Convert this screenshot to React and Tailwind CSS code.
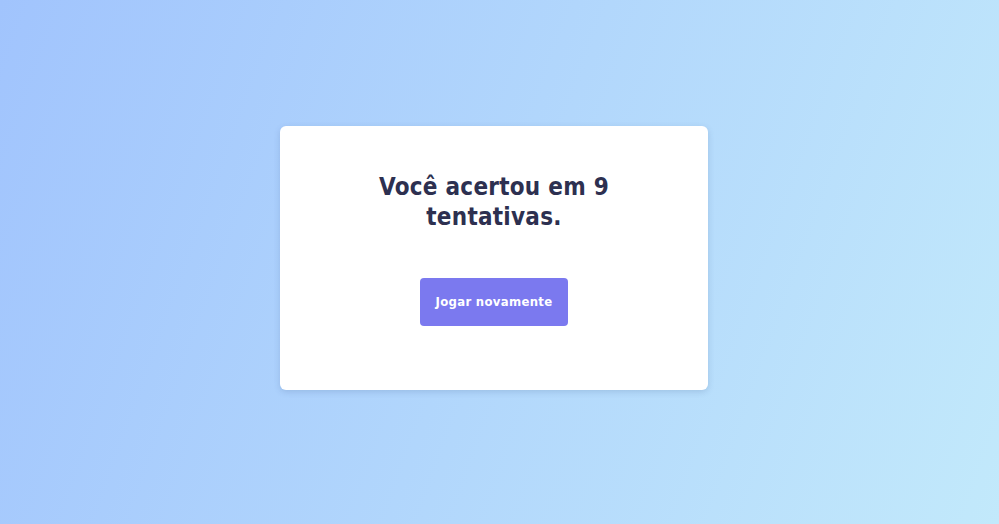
export default function App() {
  return (
    <div className="min-h-screen w-full bg-[linear-gradient(110deg,#a1c4fd_0%,#c2e9fb_100%)] flex items-center justify-center pr-[11px] pb-[8px]" style={{ fontFamily: '"DejaVu Sans Condensed", "DejaVu Sans", Verdana, sans-serif' }}>
      <div className="w-[428px] h-[264px] bg-white rounded-md shadow-[0_2px_6px_rgba(60,90,140,0.2)] flex flex-col items-center px-16 pt-[46px]">
        <h1 className="text-[24px] leading-[30px] font-bold tracking-[0.25px] text-[#2d3050] text-center">Você acertou em 9 tentativas.</h1>
        <button className="mt-[46px] w-[148px] h-[48px] rounded bg-[#7b79ef] text-white text-[13px] font-bold tracking-[0.3px]">Jogar novamente</button>
      </div>
    </div>
  );
}
